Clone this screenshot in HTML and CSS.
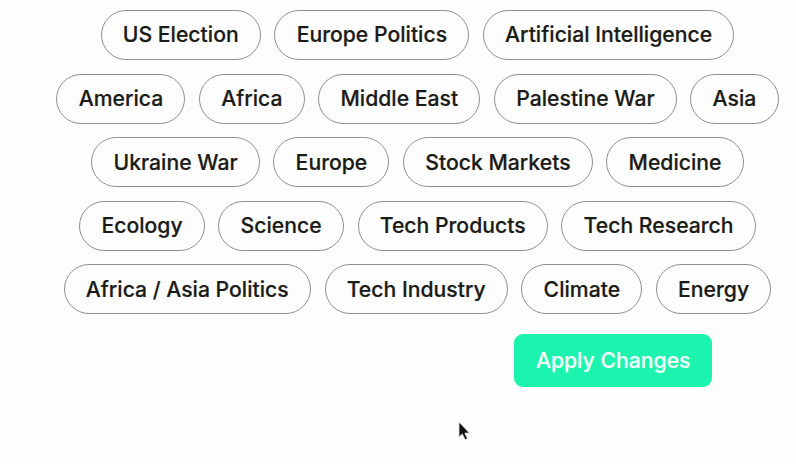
FILE: index.html
```html
<!DOCTYPE html>
<html lang="en">
<head>
<meta charset="utf-8">
<title>Topics</title>
<link rel="stylesheet" href="styles.css">
</head>
<body>
<main class="topics">
  <div class="row"><button class="chip">US Election</button><button class="chip">Europe Politics</button><button class="chip">Artificial Intelligence</button></div>
  <div class="row"><button class="chip">America</button><button class="chip">Africa</button><button class="chip">Middle East</button><button class="chip">Palestine War</button><button class="chip">Asia</button></div>
  <div class="row"><button class="chip">Ukraine War</button><button class="chip">Europe</button><button class="chip">Stock Markets</button><button class="chip">Medicine</button></div>
  <div class="row"><button class="chip">Ecology</button><button class="chip">Science</button><button class="chip">Tech Products</button><button class="chip">Tech Research</button></div>
  <div class="row"><button class="chip">Africa / Asia Politics</button><button class="chip">Tech Industry</button><button class="chip">Climate</button><button class="chip">Energy</button></div>
</main>
<div class="actions"><button class="apply">Apply Changes</button></div>
<svg class="cursor" width="14" height="21" viewBox="0 0 14 21"><path d="M1 1v15l3.3-3 2.8 5.7 2.4-1.1-2.7-5.5h4.6z" fill="#111" stroke="#e4e4ec" stroke-width=".8"/></svg>
</body>
</html>
```
FILE: styles.css
```css
* { box-sizing: border-box; }
body {
  margin: 0;
  height: 464px;
  overflow: hidden;
  background: #fdfdfe;
  font-family: Inter, sans-serif;
}
.topics {
  display: flex;
  flex-direction: column;
  gap: 13.6px;
  padding: 10px 0 0 39px;
}
.row {
  display: flex;
  justify-content: center;
  gap: 13.6px;
}
.chip {
  height: 50px;
  padding: 0 21.2px;
  border: 1px solid #8f8f8c;
  border-radius: 25px;
  background: transparent;
  color: #1b1b16;
  font: 500 21.2px/1 Inter, sans-serif;
  -webkit-text-stroke: .2px #1b1b16;
  white-space: nowrap;
}
.actions {
  display: flex;
  justify-content: flex-end;
  padding: 20px 84px 0 0;
}
.apply {
  height: 53px;
  padding: 0 21.5px;
  border: 0;
  border-radius: 9px;
  background: #1cf3ae;
  color: #f4fffb;
  font: 500 21.2px/1 Inter, sans-serif;
  -webkit-text-stroke: .2px #f4fffb;
}
.cursor {
  position: absolute;
  left: 458px;
  top: 421px;
}
```
